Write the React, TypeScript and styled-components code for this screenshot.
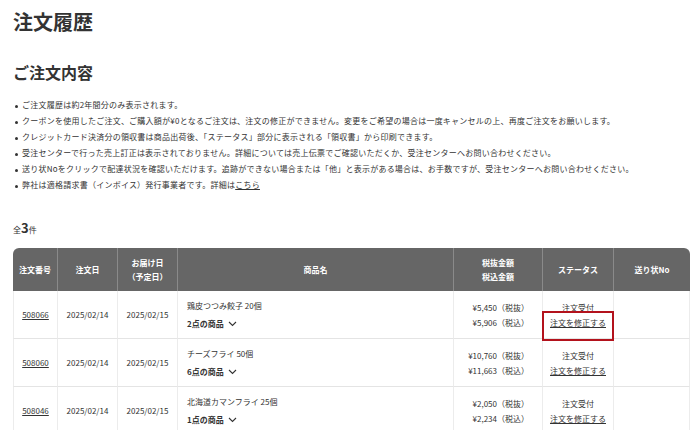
import React from 'react'
import styled, { createGlobalStyle } from 'styled-components'

const GlobalStyle = createGlobalStyle`
  body {
    margin: 0;
    background: #fff;
    color: #333;
    font-family: "Noto Sans CJK JP", "Noto Sans", sans-serif;
  }
`

const notes = [
  'ご注文履歴は約2年間分のみ表示されます。',
  'クーポンを使用したご注文、ご購入額が¥0となるご注文は、注文の修正ができません。変更をご希望の場合は一度キャンセルの上、再度ご注文をお願いします。',
  'クレジットカード決済分の領収書は商品出荷後、「ステータス」部分に表示される「領収書」から印刷できます。',
  '受注センターで行った売上訂正は表示されておりません。詳細については売上伝票でご確認いただくか、受注センターへお問い合わせください。',
  '送り状Noをクリックで配達状況を確認いただけます。追跡ができない場合または「他」と表示がある場合は、お手数ですが、受注センターへお問い合わせください。',
]

const orders = [
  { no: '508066', date: '2025/02/14', due: '2025/02/15', name: '鶏皮つつみ餃子 20個', count: 2, ex: '¥5,450', inc: '¥5,906', marked: true },
  { no: '508060', date: '2025/02/14', due: '2025/02/15', name: 'チーズフライ 50個', count: 6, ex: '¥10,760', inc: '¥11,663', marked: false },
  { no: '508046', date: '2025/02/14', due: '2025/02/15', name: '北海道カマンフライ 25個', count: 1, ex: '¥2,050', inc: '¥2,234', marked: false },
]

const Chevron = () => (
  <svg width="9" height="6" viewBox="0 0 9 6" fill="none">
    <path d="M1 1l3.5 3.5L8 1" stroke="#333" strokeWidth="1.1" />
  </svg>
)

const App = () => {
  return (
    <Page>
      <GlobalStyle />
      <Title>注文履歴</Title>
      <SubTitle>ご注文内容</SubTitle>
      <Notes>
        {notes.map((n) => (
          <li key={n}>{n}</li>
        ))}
        <li>
          弊社は適格請求書（インボイス）発行事業者です。詳細は<TextLink>こちら</TextLink>
        </li>
      </Notes>
      <Count>
        全<strong>3</strong>件
      </Count>
      <Table>
        <colgroup>
          <col style={{ width: 44 }} />
          <col style={{ width: 60 }} />
          <col style={{ width: 60 }} />
          <col />
          <col style={{ width: 89 }} />
          <col style={{ width: 71 }} />
          <col style={{ width: 77 }} />
        </colgroup>
        <thead>
          <tr>
            <Th>注文番号</Th>
            <Th>注文日</Th>
            <Th>
              お届け日
              <br />
              （予定日）
            </Th>
            <Th>商品名</Th>
            <Th>
              税抜金額
              <br />
              税込金額
            </Th>
            <Th>ステータス</Th>
            <Th>送り状No</Th>
          </tr>
        </thead>
        <tbody>
          {orders.map((o) => (
            <tr key={o.no}>
              <Td>
                <TextLink>{o.no}</TextLink>
              </Td>
              <Td>{o.date}</Td>
              <Td>{o.due}</Td>
              <Td $align="left">
                <ItemName>{o.name}</ItemName>
                <ItemToggle>
                  {o.count}点の商品 <Chevron />
                </ItemToggle>
              </Td>
              <Td $align="right">
                {o.ex}（税抜）
                <br />
                {o.inc}（税込）
              </Td>
              <Td>
                注文受付
                <br />
                <EditWrap>
                  <TextLink>注文を修正する</TextLink>
                  {o.marked && <Highlight />}
                </EditWrap>
              </Td>
              <Td />
            </tr>
          ))}
        </tbody>
      </Table>
    </Page>
  )
}

const Page = styled.div`
  padding: 8px 10px 0 13px;
  width: 700px;
  box-sizing: border-box;
  height: 430px;
  overflow: hidden;
`

const Title = styled.h1`
  margin: 0;
  font-size: 20px;
  line-height: 28px;
  font-weight: 700;
  color: #333;
`

const SubTitle = styled.h2`
  margin: 24px 0 0;
  font-size: 16px;
  line-height: 24px;
  font-weight: 700;
  color: #333;
`

const Notes = styled.ul`
  margin: 13px 0 0;
  padding: 0 0 0 9px;
  list-style: none;
  font-size: 8px;
  line-height: 16px;
  letter-spacing: 0.24px;
  color: #333;

  li {
    position: relative;
  }

  li::before {
    content: '';
    position: absolute;
    left: -7px;
    top: 8px;
    width: 3px;
    height: 3px;
    border-radius: 50%;
    background: #333;
  }
`

const TextLink = styled.span`
  color: #333;
  text-decoration: underline;
  text-underline-offset: 1px;
`

const Count = styled.div`
  margin-top: 25px;
  font-size: 8px;
  line-height: 20px;

  strong {
    font-size: 13px;
    font-weight: 700;
  }
`

const Table = styled.table`
  margin-top: 8px;
  width: 677px;
  border-collapse: separate;
  border-spacing: 0;
  table-layout: fixed;
  font-size: 8px;
  color: #333;
`

const Th = styled.th`
  height: 43px;
  padding: 0 4px;
  background: #666;
  color: #fff;
  font-weight: 700;
  line-height: 14px;
  text-align: center;
  border-left: 1px solid #8a8a8a;

  &:first-child {
    border-left: none;
    border-top-left-radius: 6px;
  }

  &:last-child {
    border-top-right-radius: 6px;
  }
`

const Td = styled.td<{ $align?: 'left' | 'right' }>`
  height: 47px;
  padding: 0 ${(p) => (p.$align ? '13px' : '4px')} 0 ${(p) => (p.$align === 'left' ? '9px' : '4px')};
  text-align: ${(p) => p.$align ?? 'center'};
  line-height: 15px;
  border-left: 1px solid #ececec;
  border-bottom: 1px solid #e4e4e4;
  vertical-align: middle;

  &:last-child {
    border-right: 1px solid #ececec;
  }
`

const ItemName = styled.div`
  line-height: 14px;
`

const ItemToggle = styled.div`
  margin-top: 4px;
  font-weight: 700;
  line-height: 14px;
  display: flex;
  align-items: center;
  gap: 4px;
`

const EditWrap = styled.span`
  position: relative;
  display: inline-block;
`

const Highlight = styled.span`
  position: absolute;
  left: -8px;
  right: -8px;
  top: -4px;
  bottom: -11px;
  border: 2px solid #b3121c;
`

export default App
